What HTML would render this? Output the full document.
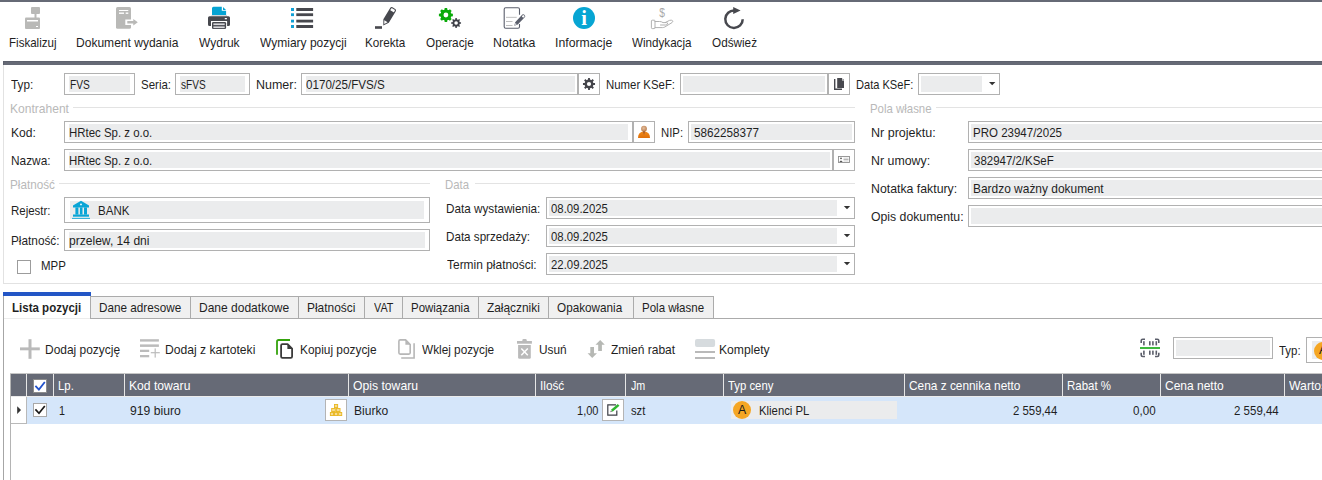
<!DOCTYPE html>
<html lang="pl"><head><meta charset="utf-8"><title>Faktura sprzedaży</title>
<style>
html,body{margin:0;padding:0;background:#fff;}
body{width:1322px;height:480px;overflow:hidden;position:relative;font-family:"Liberation Sans",sans-serif;font-size:13.0px;line-height:16px;color:#1f1f1f;}
.b{position:absolute;}
.t{position:absolute;white-space:nowrap;transform-origin:0 0;}
svg{position:absolute;overflow:visible;}
</style></head><body>
<div class="b" style="left:0px;top:0px;width:1322px;height:2px;background:#666a76"></div>
<div class="b" style="left:3px;top:61px;width:1319px;height:4px;background:#666a76"></div>
<div class="b" style="left:3px;top:61px;width:1319px;height:1px;background:#5d616d"></div>
<div class="b" style="left:3px;top:61px;width:1px;height:4px;background:#5d616d"></div>
<div class="b" style="left:3px;top:65px;width:1px;height:219px;background:#e2e2e2"></div>
<div class="b" style="left:3px;top:283px;width:1319px;height:1px;background:#e2e2e2"></div>
<div class="b" style="left:73px;top:107px;width:782px;height:1px;background:#e3e3e3"></div>
<div class="b" style="left:936px;top:107px;width:386px;height:1px;background:#e3e3e3"></div>
<div class="b" style="left:59px;top:183px;width:371px;height:1px;background:#e3e3e3"></div>
<div class="b" style="left:475px;top:183px;width:380px;height:1px;background:#e3e3e3"></div>
<div class="b" style="left:64px;top:73px;width:71px;height:22px;background:#fff;border:1px solid #b1b1b1;box-sizing:border-box"></div>
<div class="b" style="left:69px;top:76px;width:61px;height:16px;background:#ebeced"></div>
<div class="b" style="left:175px;top:73px;width:75px;height:22px;background:#fff;border:1px solid #b1b1b1;box-sizing:border-box"></div>
<div class="b" style="left:180px;top:76px;width:65px;height:16px;background:#ebeced"></div>
<div class="b" style="left:301px;top:73px;width:277px;height:22px;background:#fff;border:1px solid #b1b1b1;box-sizing:border-box"></div>
<div class="b" style="left:306px;top:76px;width:269px;height:16px;background:#ebeced"></div>
<div class="b" style="left:578px;top:73px;width:22px;height:22px;background:#fff;border:1px solid #b1b1b1;box-sizing:border-box"></div>
<div class="b" style="left:680px;top:73px;width:148px;height:22px;background:#fff;border:1px solid #b1b1b1;box-sizing:border-box"></div>
<div class="b" style="left:683px;top:76px;width:142px;height:16px;background:#ebeced"></div>
<div class="b" style="left:828px;top:73px;width:22px;height:22px;background:#fff;border:1px solid #b1b1b1;box-sizing:border-box"></div>
<div class="b" style="left:918px;top:73px;width:82px;height:22px;background:#fff;border:1px solid #b1b1b1;box-sizing:border-box"></div>
<div class="b" style="left:921px;top:76px;width:61px;height:16px;background:#ebeced"></div>
<div class="b" style="left:64px;top:121px;width:569px;height:22px;background:#fff;border:1px solid #b1b1b1;box-sizing:border-box"></div>
<div class="b" style="left:69px;top:124px;width:559px;height:16px;background:#ebeced"></div>
<div class="b" style="left:633px;top:121px;width:22px;height:22px;background:#fff;border:1px solid #b1b1b1;box-sizing:border-box"></div>
<div class="b" style="left:688px;top:121px;width:167px;height:22px;background:#fff;border:1px solid #b1b1b1;box-sizing:border-box"></div>
<div class="b" style="left:691px;top:124px;width:161px;height:16px;background:#ebeced"></div>
<div class="b" style="left:64px;top:149px;width:769px;height:22px;background:#fff;border:1px solid #b1b1b1;box-sizing:border-box"></div>
<div class="b" style="left:69px;top:152px;width:761px;height:16px;background:#ebeced"></div>
<div class="b" style="left:833px;top:149px;width:22px;height:22px;background:#fff;border:1px solid #b1b1b1;box-sizing:border-box"></div>
<div class="b" style="left:64px;top:197px;width:366px;height:26px;background:#fff;border:1px solid #b1b1b1;box-sizing:border-box"></div>
<div class="b" style="left:70px;top:201px;width:354px;height:18px;background:#ebeced"></div>
<div class="b" style="left:64px;top:229px;width:366px;height:22px;background:#fff;border:1px solid #b1b1b1;box-sizing:border-box"></div>
<div class="b" style="left:69px;top:232px;width:356px;height:16px;background:#ebeced"></div>
<div class="b" style="left:17px;top:260px;width:14px;height:14px;background:#fff;border:1px solid #9c9c9c;box-sizing:border-box"></div>
<div class="b" style="left:546px;top:197px;width:309px;height:22px;background:#fff;border:1px solid #b1b1b1;box-sizing:border-box"></div>
<div class="b" style="left:549px;top:200px;width:288px;height:16px;background:#ebeced"></div>
<div class="b" style="left:546px;top:225px;width:309px;height:22px;background:#fff;border:1px solid #b1b1b1;box-sizing:border-box"></div>
<div class="b" style="left:549px;top:228px;width:288px;height:16px;background:#ebeced"></div>
<div class="b" style="left:546px;top:253px;width:309px;height:22px;background:#fff;border:1px solid #b1b1b1;box-sizing:border-box"></div>
<div class="b" style="left:549px;top:256px;width:288px;height:16px;background:#ebeced"></div>
<div class="b" style="left:968px;top:121px;width:400px;height:22px;background:#fff;border:1px solid #b1b1b1;box-sizing:border-box"></div>
<div class="b" style="left:971px;top:124px;width:392px;height:16px;background:#ebeced"></div>
<div class="b" style="left:968px;top:149px;width:400px;height:22px;background:#fff;border:1px solid #b1b1b1;box-sizing:border-box"></div>
<div class="b" style="left:971px;top:152px;width:392px;height:16px;background:#ebeced"></div>
<div class="b" style="left:968px;top:177px;width:400px;height:22px;background:#fff;border:1px solid #b1b1b1;box-sizing:border-box"></div>
<div class="b" style="left:971px;top:180px;width:392px;height:16px;background:#ebeced"></div>
<div class="b" style="left:968px;top:205px;width:400px;height:22px;background:#fff;border:1px solid #b1b1b1;box-sizing:border-box"></div>
<div class="b" style="left:971px;top:208px;width:392px;height:16px;background:#ebeced"></div>
<div class="b" style="left:3px;top:318px;width:1319px;height:1px;background:#ababab"></div>
<div class="b" style="left:90px;top:296px;width:624px;height:22px;background:#f0f0f0;border:1px solid #ababab;box-sizing:border-box;border-bottom:none"></div>
<div class="b" style="left:190px;top:296px;width:1px;height:22px;background:#ababab"></div>
<div class="b" style="left:298px;top:296px;width:1px;height:22px;background:#ababab"></div>
<div class="b" style="left:363.5px;top:296px;width:1px;height:22px;background:#ababab"></div>
<div class="b" style="left:402px;top:296px;width:1px;height:22px;background:#ababab"></div>
<div class="b" style="left:478px;top:296px;width:1px;height:22px;background:#ababab"></div>
<div class="b" style="left:548px;top:296px;width:1px;height:22px;background:#ababab"></div>
<div class="b" style="left:633px;top:296px;width:1px;height:22px;background:#ababab"></div>
<div class="b" style="left:3px;top:292px;width:88px;height:4px;background:#2356c6"></div>
<div class="b" style="left:3px;top:296px;width:88px;height:23px;background:#fff;border-left:1px solid #ababab;border-right:1px solid #ababab;box-sizing:border-box"></div>
<div class="b" style="left:4px;top:318px;width:86px;height:1px;background:#ececec"></div>
<div class="b" style="left:3px;top:319px;width:1px;height:161px;background:#a6a6a6"></div>
<div class="b" style="left:1173px;top:337px;width:100px;height:22px;background:#fff;border:1px solid #b1b1b1;box-sizing:border-box"></div>
<div class="b" style="left:1176px;top:340px;width:94px;height:16px;background:#ebeced"></div>
<div class="b" style="left:1306px;top:337px;width:30px;height:26px;background:#fff;border:1px solid #b1b1b1;box-sizing:border-box"></div>
<div class="b" style="left:1312px;top:341px;width:20px;height:18px;background:#ebeced"></div>
<div class="b" style="left:1313.5px;top:341.5px;width:18px;height:18px;background:#f5a623;border-radius:9px"></div>
<div class="b" style="left:10px;top:373px;width:1px;height:107px;background:#b4b4b4"></div>
<div class="b" style="left:10px;top:373px;width:1312px;height:1px;background:#c6c6c6"></div>
<div class="b" style="left:11px;top:374px;width:1311px;height:22px;background:#666a76"></div>
<div class="b" style="left:26px;top:374px;width:1px;height:22px;background:#e6e6e6"></div>
<div class="b" style="left:53px;top:374px;width:1px;height:22px;background:#e6e6e6"></div>
<div class="b" style="left:124px;top:374px;width:1px;height:22px;background:#e6e6e6"></div>
<div class="b" style="left:348px;top:374px;width:1px;height:22px;background:#e6e6e6"></div>
<div class="b" style="left:535px;top:374px;width:1px;height:22px;background:#e6e6e6"></div>
<div class="b" style="left:625px;top:374px;width:1px;height:22px;background:#e6e6e6"></div>
<div class="b" style="left:723px;top:374px;width:1px;height:22px;background:#e6e6e6"></div>
<div class="b" style="left:904px;top:374px;width:1px;height:22px;background:#e6e6e6"></div>
<div class="b" style="left:1062px;top:374px;width:1px;height:22px;background:#e6e6e6"></div>
<div class="b" style="left:1160px;top:374px;width:1px;height:22px;background:#e6e6e6"></div>
<div class="b" style="left:1284px;top:374px;width:1px;height:22px;background:#e6e6e6"></div>
<div class="b" style="left:11px;top:396px;width:1311px;height:1px;background:#ebebeb"></div>
<div class="b" style="left:27px;top:397px;width:1295px;height:26.5px;background:#d5e6fa"></div>
<div class="b" style="left:26px;top:397px;width:1px;height:27px;background:#b9b9b9"></div>
<div class="b" style="left:11px;top:423px;width:16px;height:1px;background:#b9b9b9"></div>
<div class="b" style="left:33px;top:379px;width:14px;height:14px;background:#fff;border:1px solid #8c8c8c;box-sizing:border-box"></div>
<div class="b" style="left:33px;top:403px;width:14px;height:14px;background:#fff;border:1px solid #a8a8a8;box-sizing:border-box"></div>
<div class="b" style="left:325px;top:399px;width:22px;height:22px;background:#fff;border:1px solid #b4b4b4;box-sizing:border-box"></div>
<div class="b" style="left:602px;top:399px;width:22px;height:22px;background:#fff;border:1px solid #b4b4b4;box-sizing:border-box"></div>
<div class="b" style="left:731px;top:401px;width:166px;height:18px;background:#ebeced"></div>
<div class="b" style="left:733px;top:401px;width:18.2px;height:18.2px;background:#f5a623;border-radius:10px"></div>
<svg width="1322" height="480" viewBox="0 0 1322 480" style="left:0;top:0">
<rect x="31" y="7" width="9" height="7" rx="1" fill="#b9b9b7"/>
<rect x="34.5" y="13.5" width="2" height="4.5" fill="#b9b9b7"/>
<rect x="25" y="17.5" width="15" height="11.5" rx="1" fill="#b9b9b7"/>
<rect x="27" y="20" width="11" height="1.5" fill="#fff"/>
<rect x="36" y="26" width="2" height="1" fill="#fff"/>
<rect x="116" y="7" width="15" height="21.8" rx="1.5" fill="#b9b9b7"/>
<rect x="119" y="10" width="9.3" height="1" fill="#fff"/>
<rect x="119" y="12.5" width="5" height="1.4" fill="#fff"/><rect x="125.7" y="12.5" width="2.6" height="1.4" fill="#fff"/>
<rect x="125.3" y="19.5" width="6" height="5.5" fill="#fff"/>
<path d="M127.3 21 H133.3 V19 L137.8 22.2 L133.3 25.4 V23.4 H127.3Z" fill="#b9b9b7"/>
<path d="M213.5 6.8 H221.8 V10.7 H226.1 V15 H212 V8.3 Q212 6.8 213.5 6.8Z" fill="#05a3d3"/>
<path d="M223 7 L226 10 H223Z" fill="#05a3d3"/>
<rect x="211.5" y="15" width="15.5" height="1.4" fill="#d3d6d9"/>
<path d="M209.5 16.3 H228.5 Q230 16.3 230 17.8 V24.5 Q230 26 228.5 26 H227.1 V21 H211 V26 H209.5 Q208 26 208 24.5 V17.8 Q208 16.3 209.5 16.3Z" fill="#47484e"/>
<rect x="224.7" y="18" width="2.3" height="1.2" rx="0.5" fill="#fff"/>
<rect x="212" y="21.9" width="14.1" height="7.1" rx="1.3" fill="#47484e"/>
<rect x="213.4" y="23.4" width="11.3" height="1.7" fill="#d8d8db"/><rect x="213.4" y="26.4" width="11.3" height="1.7" fill="#d8d8db"/>
<rect x="291" y="8" width="3" height="3" fill="#10a0d6"/>
<rect x="296.3" y="8" width="16.8" height="3" fill="#47484e"/>
<rect x="291" y="13.3" width="3" height="2.8" fill="#10a0d6"/>
<rect x="296.3" y="13.3" width="16.8" height="2.8" fill="#47484e"/>
<rect x="291" y="19.7" width="3" height="2.8" fill="#10a0d6"/>
<rect x="296.3" y="19.7" width="16.8" height="2.8" fill="#47484e"/>
<rect x="291" y="25" width="3" height="3" fill="#10a0d6"/>
<rect x="296.3" y="25" width="16.8" height="3" fill="#47484e"/>
<g transform="translate(383.3 25.6) rotate(31.2)"><path d="M0 0 L-3.2 -5.4 V-18.8 Q-3.2 -20.4 -1.6 -20.4 H1.6 Q3.2 -20.4 3.2 -18.8 V-5.4Z" fill="#47484e"/><path d="M0 -1.8 L-1.9 -5.1 H1.9Z" fill="#fff"/><rect x="-2.1" y="-19.3" width="4.2" height="2.6" rx="0.6" fill="#fff"/></g>
<rect x="375" y="26.2" width="7" height="2.6" fill="#47484e"/>
<path d="M447.28 20.22 L447.16 21.99 L444.64 21.99 L444.52 20.22 L443.19 19.67 L441.85 20.83 L440.07 19.05 L441.23 17.71 L440.68 16.38 L438.91 16.26 L438.91 13.74 L440.68 13.62 L441.23 12.29 L440.07 10.95 L441.85 9.17 L443.19 10.33 L444.52 9.78 L444.64 8.01 L447.16 8.01 L447.28 9.78 L448.61 10.33 L449.95 9.17 L451.73 10.95 L450.57 12.29 L451.12 13.62 L452.89 13.74 L452.89 16.26 L451.12 16.38 L450.57 17.71 L451.73 19.05 L449.95 20.83 L448.61 19.67Z" fill="#0aab0a"/>
<circle cx="445.90" cy="15.00" r="5.40" fill="#0aab0a"/>
<circle cx="445.90" cy="15.00" r="2.40" fill="#fff"/>
<path d="M456.85 26.42 L456.84 27.94 L455.36 27.94 L455.35 26.42 L454.21 25.95 L453.13 27.02 L452.08 25.97 L453.15 24.89 L452.68 23.75 L451.16 23.74 L451.16 22.26 L452.68 22.25 L453.15 21.11 L452.08 20.03 L453.13 18.98 L454.21 20.05 L455.35 19.58 L455.36 18.06 L456.84 18.06 L456.85 19.58 L457.99 20.05 L459.07 18.98 L460.12 20.03 L459.05 21.11 L459.52 22.25 L461.04 22.26 L461.04 23.74 L459.52 23.75 L459.05 24.89 L460.12 25.97 L459.07 27.02 L457.99 25.95Z" fill="#3f4148"/>
<circle cx="456.10" cy="23.00" r="3.50" fill="#3f4148"/>
<circle cx="456.10" cy="23.00" r="1.80" fill="#fff"/>
<path d="M519.5 14.7 V9.3 Q519.5 7.8 518 7.8 H505.7 Q504.2 7.8 504.2 9.3 V26.7 Q504.2 28.2 505.7 28.2 H518 Q519.5 28.2 519.5 26.7 V24" fill="none" stroke="#5b5f6c" stroke-width="1.1"/>
<rect x="506" y="16.85" width="10.7" height="0.9" fill="#b8b8b8"/>
<rect x="506" y="21.05" width="6.5" height="0.9" fill="#b8b8b8"/>
<rect x="506" y="25.05" width="6.5" height="0.9" fill="#b8b8b8"/>
<g transform="translate(514.3 25.7) rotate(43.5)"><path d="M0 0 L-1.8 -3.2 V-13.6 Q-1.8 -14.8 -0.6 -14.8 H0.6 Q1.8 -14.8 1.8 -13.6 V-3.2Z" fill="#5b5f6c"/><path d="M0 -1 L-0.9 -2.7 H0.9Z" fill="#fff"/><rect x="-1.1" y="-14.1" width="2.2" height="2.2" rx="0.6" fill="#fff"/></g>
<circle cx="584" cy="18" r="11" fill="#07a5d3"/>
<text x="584" y="25.3" text-anchor="middle" font-family="'Liberation Serif',serif" font-weight="bold" font-size="20.5" fill="#fff">i</text>
<text transform="translate(662 16.6) scale(0.82 1)" text-anchor="middle" font-family="'Liberation Sans',sans-serif" font-size="12.5" fill="#a8a8a8">$</text>
<rect x="651.4" y="20.2" width="3.6" height="8.4" rx="0.8" fill="none" stroke="#adadad" stroke-width="0.95"/>
<path d="M655 21.5 H659.5 Q661.5 21.5 663 22.6 H666.5 Q668 22.6 667.6 24 Q667.2 25 665.8 25 H660.5 M665.5 22.4 L669.5 20.4 Q671.5 19.7 672.6 20.8 Q673.2 21.8 672 22.6 L664.8 27 Q663.8 27.6 662.5 27.6 H655" fill="none" stroke="#adadad" stroke-width="0.95" stroke-linejoin="round" stroke-linecap="round"/>
<path d="M734.6 10.6 A8.7 8.7 0 1 0 742.7 19.2" fill="none" stroke="#47484e" stroke-width="2.5"/>
<path d="M733.2 6.9 V14.1 L740.6 10.4Z" fill="#47484e"/>
<path d="M589.94 88.30 L589.91 90.03 L588.09 90.03 L588.06 88.30 L586.63 87.71 L585.38 88.91 L584.09 87.62 L585.29 86.37 L584.70 84.94 L582.97 84.91 L582.97 83.09 L584.70 83.06 L585.29 81.63 L584.09 80.38 L585.38 79.09 L586.63 80.29 L588.06 79.70 L588.09 77.97 L589.91 77.97 L589.94 79.70 L591.37 80.29 L592.62 79.09 L593.91 80.38 L592.71 81.63 L593.30 83.06 L595.03 83.09 L595.03 84.91 L593.30 84.94 L592.71 86.37 L593.91 87.62 L592.62 88.91 L591.37 87.71Z" fill="#44454b"/>
<circle cx="589.00" cy="84.00" r="4.40" fill="#44454b"/>
<circle cx="589.00" cy="84.00" r="2.10" fill="#fff"/>
<path d="M837.2 78 H842 V80.6 H844 V87.9 H837.2Z" fill="#47484e"/><path d="M842.6 78.2 L843.9 79.9 H842.6Z" fill="#47484e"/>
<path d="M834.7 79 V89.3 H842" fill="none" stroke="#47484e" stroke-width="1.4"/>
<defs><radialGradient id="hd" cx="0.45" cy="0.4" r="0.6"><stop offset="0" stop-color="#e6c19f"/><stop offset="1" stop-color="#b97a4a"/></radialGradient><linearGradient id="bd" x1="0" y1="0" x2="0" y2="1"><stop offset="0" stop-color="#f08a1c"/><stop offset="1" stop-color="#e06f08"/></linearGradient></defs>
<path d="M638 138 Q638 132 644 131.6 Q650 132 650 138Z" fill="url(#bd)"/>
<path d="M642.6 130.6 H645.4 L644 135Z" fill="#a85a28"/>
<circle cx="644" cy="128.7" r="2.9" fill="url(#hd)"/>
<rect x="838.5" y="156.5" width="11" height="6" fill="#fff" stroke="#8f8f8f" stroke-width="0.9"/>
<circle cx="841" cy="158.4" r="0.8" fill="#444"/><path d="M839.4 162 Q841 159 842.6 162Z" fill="#555"/>
<rect x="843.5" y="157.8" width="5" height="0.7" fill="#bbb"/><rect x="843.5" y="159.2" width="5" height="0.7" fill="#999"/><rect x="843.5" y="160.6" width="5" height="0.7" fill="#bbb"/>
<path d="M81 200.8 L89 205.6 V207.4 H73 V205.6Z" fill="#0aa5d6"/>
<circle cx="81" cy="204.4" r="0.9" fill="#fff"/>
<rect x="75.4" y="207.4" width="3" height="7.2" fill="#0aa5d6"/>
<rect x="79.9" y="207.4" width="2.6" height="7.2" fill="#0aa5d6"/>
<rect x="84" y="207.4" width="3" height="7.2" fill="#0aa5d6"/>
<rect x="73" y="214.5" width="16" height="2.2" fill="#0aa5d6"/>
<rect x="72" y="217.9" width="18" height="0.9" fill="#0aa5d6"/>
<path d="M843.8 205.9 h6.4 l-3.2 3.3Z" fill="#333"/>
<path d="M843.8 233.9 h6.4 l-3.2 3.3Z" fill="#333"/>
<path d="M843.8 261.9 h6.4 l-3.2 3.3Z" fill="#333"/>
<path d="M989 81.9 h6.4 l-3.2 3.3Z" fill="#333"/>
<rect x="20" y="347.4" width="19.8" height="2.9" fill="#bababa"/><rect x="28.5" y="339.2" width="3" height="19.6" fill="#bababa"/>
<rect x="140" y="339.2" width="18.9" height="2.4" fill="#bcbcbc"/>
<rect x="140" y="344.4" width="18.9" height="2.5" fill="#bcbcbc"/>
<rect x="140" y="349.7" width="9.2" height="2.3" fill="#bcbcbc"/>
<rect x="140" y="355" width="9.2" height="2.3" fill="#bcbcbc"/>
<rect x="150.8" y="352.1" width="9" height="1.2" fill="#bcbcbc"/><rect x="154.6" y="348.4" width="1.2" height="9.2" fill="#bcbcbc"/>
<path d="M277 354.7 V341.6 Q277 340 278.6 340 H290" fill="none" stroke="#35a30d" stroke-width="1.8"/>
<path d="M287.6 344.2 H282.4 Q281.1 344.2 281.1 345.5 V356.6 Q281.1 357.9 282.4 357.9 H290.8 Q292.1 357.9 292.1 356.6 V348.7Z" fill="#fff" stroke="#3b3b3b" stroke-width="1.8" stroke-linejoin="round"/>
<path d="M287.4 344.2 V348.9 H292.1Z" fill="#3b3b3b"/>
<path d="M405.6 339.9 H400.2 Q398.9 339.9 398.9 341.2 V352.8 Q398.9 354.1 400.2 354.1 H408.9 Q410.2 354.1 410.2 352.8 V344.6Z" fill="#fff" stroke="#b7b7b7" stroke-width="1.6" stroke-linejoin="round"/>
<path d="M405.4 339.9 V344.8 H410.2Z" fill="#b7b7b7"/>
<path d="M414.1 343.2 V358 H401.2" fill="none" stroke="#b7b7b7" stroke-width="1.6"/>
<rect x="517" y="341" width="14.9" height="2.7" fill="#bababa"/>
<path d="M522.3 341.2 V340.4 Q522.3 339 523.7 339 H525.4 Q526.8 339 526.8 340.4 V341.2Z" fill="#bababa"/>
<path d="M518.1 345.1 H530.8 V357.4 Q530.8 358.8 529.4 358.8 H519.5 Q518.1 358.8 518.1 357.4Z" fill="#bababa"/>
<path d="M521.3 348.6 L527.8 355.3 M527.8 348.6 L521.3 355.3" stroke="#fff" stroke-width="1.5" fill="none"/>
<path d="M600.2 340.1 L604.8 344.7 H601.9 V351 H598.2 V344.7 H595.5Z" fill="#b6b8b4"/>
<path d="M590.3 347 H594 V353.2 H597 L592.2 358 L587.6 353.2 H590.3Z" fill="#b6b8b4"/>
<rect x="695" y="339.1" width="20.1" height="7.8" rx="2" fill="#d6dbde"/>
<rect x="695" y="351.1" width="20" height="1.8" fill="#b2b2b2"/><rect x="695" y="357.1" width="20" height="1.8" fill="#b2b2b2"/>
<path d="M1141.2 343 V340.8 Q1141.2 339.3 1142.7 339.3 H1145 M1155 339.3 H1157.3 Q1158.8 339.3 1158.8 340.8 V343 M1158.8 352.8 V355 Q1158.8 356.5 1157.3 356.5 H1155 M1145 356.5 H1142.7 Q1141.2 356.5 1141.2 355 V352.8" fill="none" stroke="#5b5e6a" stroke-width="1.6"/>
<rect x="1143.1" y="341.2" width="1.6" height="4.2" fill="#5b5e6a"/><rect x="1143.1" y="350.6" width="1.6" height="4.2" fill="#5b5e6a"/>
<rect x="1149" y="341.2" width="1.6" height="4.2" fill="#5b5e6a"/><rect x="1149" y="350.6" width="1.6" height="4.2" fill="#5b5e6a"/>
<rect x="1152.1" y="341.2" width="1.6" height="4.2" fill="#5b5e6a"/><rect x="1152.1" y="350.6" width="1.6" height="4.2" fill="#5b5e6a"/>
<rect x="1155.5" y="341.2" width="1.6" height="4.2" fill="#5b5e6a"/><rect x="1155.5" y="350.6" width="1.6" height="4.2" fill="#5b5e6a"/>
<rect x="1140" y="347" width="20" height="2" fill="#3fb83f"/>
<path d="M35.4 385.8 L38.9 389.6 L44.8 382" fill="none" stroke="#2252cc" stroke-width="1.8"/>
<path d="M35.4 409.4 L39 413.3 L44.8 406" fill="none" stroke="#1a1a1a" stroke-width="1.7"/>
<path d="M17.2 406.2 V414 L21 410.1Z" fill="#333"/>
<rect x="334" y="404" width="4.1" height="4" fill="#e9b824"/><rect x="334.9" y="404.9" width="2.3" height="2.2" fill="#f6dc93"/>
<rect x="331.2" y="408" width="4.6" height="4" fill="#e9b824"/><rect x="332.1" y="408.9" width="2.8" height="2.2" fill="#f6dc93"/>
<rect x="335.9" y="408" width="4.6" height="4" fill="#e9b824"/><rect x="336.8" y="408.9" width="2.8" height="2.2" fill="#f6dc93"/>
<rect x="329.9" y="412" width="4.1" height="4" fill="#e9b824"/><rect x="330.8" y="412.9" width="2.3" height="2.2" fill="#f6dc93"/>
<rect x="334" y="412" width="4.1" height="4" fill="#e9b824"/><rect x="334.9" y="412.9" width="2.3" height="2.2" fill="#f6dc93"/>
<rect x="338.1" y="412" width="4.1" height="4" fill="#e9b824"/><rect x="339" y="412.9" width="2.3" height="2.2" fill="#f6dc93"/>
<path d="M616 404.9 H607.8 V415.1 H616.8 V410.6" fill="none" stroke="#3c3f46" stroke-width="1.2"/>
<path d="M618.6 404.9 L611.8 410.7" stroke="#2fb52f" stroke-width="2.5" fill="none"/>
<path d="M610.2 412.3 L610.9 410.4 L612.3 411.6Z" fill="#666"/>
</svg>

<span class="t" style="left:8.71px;top:34.50px;transform:scaleX(0.8891)">Fiskalizuj</span>
<span class="t" style="left:75.67px;top:34.50px;transform:scaleX(0.9260)">Dokument wydania</span>
<span class="t" style="left:198.98px;top:34.50px;transform:scaleX(0.9234)">Wydruk</span>
<span class="t" style="left:259.73px;top:34.50px;transform:scaleX(0.9235)">Wymiary pozycji</span>
<span class="t" style="left:365.20px;top:34.50px;transform:scaleX(0.9006)">Korekta</span>
<span class="t" style="left:426.04px;top:34.50px;transform:scaleX(0.9036)">Operacje</span>
<span class="t" style="left:493.15px;top:34.50px;transform:scaleX(0.9463)">Notatka</span>
<span class="t" style="left:555.04px;top:34.50px;transform:scaleX(0.9432)">Informacje</span>
<span class="t" style="left:632.24px;top:34.50px;transform:scaleX(0.8949)">Windykacja</span>
<span class="t" style="left:711.79px;top:34.50px;transform:scaleX(0.9028)">Odśwież</span>
<span class="t" style="left:11.37px;top:76.50px;transform:scaleX(0.9038)">Typ:</span>
<span class="t" style="left:69.56px;top:76.50px;transform:scaleX(0.7853)">FVS</span>
<span class="t" style="left:141.05px;top:76.50px;transform:scaleX(0.8840)">Seria:</span>
<span class="t" style="left:180.81px;top:76.50px;transform:scaleX(0.7741)">sFVS</span>
<span class="t" style="left:255.64px;top:76.50px;transform:scaleX(0.9605)">Numer:</span>
<span class="t" style="left:306.15px;top:76.50px;transform:scaleX(0.8941)">0170/25/FVS/S</span>
<span class="t" style="left:605.72px;top:76.50px;transform:scaleX(0.8763)">Numer KSeF:</span>
<span class="t" style="left:855.75px;top:76.50px;transform:scaleX(0.8523)">Data KSeF:</span>
<span class="t" style="left:9.92px;top:100.50px;transform:scaleX(0.9264);color:#b9b9b9">Kontrahent</span>
<span class="t" style="left:869.97px;top:100.50px;transform:scaleX(0.8781);color:#b9b9b9">Pola własne</span>
<span class="t" style="left:10.67px;top:124.50px;transform:scaleX(0.9299)">Kod:</span>
<span class="t" style="left:68.97px;top:124.50px;transform:scaleX(0.8800)">HRtec Sp. z o.o.</span>
<span class="t" style="left:661.48px;top:124.50px;transform:scaleX(0.8714)">NIP:</span>
<span class="t" style="left:693.65px;top:124.50px;transform:scaleX(0.8984)">5862258377</span>
<span class="t" style="left:10.69px;top:152.50px;transform:scaleX(0.9127)">Nazwa:</span>
<span class="t" style="left:68.97px;top:152.50px;transform:scaleX(0.8800)">HRtec Sp. z o.o.</span>
<span class="t" style="left:9.95px;top:176.50px;transform:scaleX(0.9000);color:#b9b9b9">Płatność</span>
<span class="t" style="left:444.98px;top:176.50px;transform:scaleX(0.8736);color:#b9b9b9">Data</span>
<span class="t" style="left:10.72px;top:202.50px;transform:scaleX(0.8833)">Rejestr:</span>
<span class="t" style="left:97.71px;top:202.50px;transform:scaleX(0.8876)">BANK</span>
<span class="t" style="left:10.69px;top:232.50px;transform:scaleX(0.9080)">Płatność:</span>
<span class="t" style="left:69.04px;top:232.50px;transform:scaleX(0.9282)">przelew, 14 dni</span>
<span class="t" style="left:40.72px;top:258.00px;transform:scaleX(0.8830)">MPP</span>
<span class="t" style="left:446.20px;top:200.50px;transform:scaleX(0.9004)">Data wystawienia:</span>
<span class="t" style="left:551.16px;top:200.50px;transform:scaleX(0.8734)">08.09.2025</span>
<span class="t" style="left:446.20px;top:228.50px;transform:scaleX(0.8954)">Data sprzedaży:</span>
<span class="t" style="left:551.16px;top:228.50px;transform:scaleX(0.8734)">08.09.2025</span>
<span class="t" style="left:446.87px;top:256.50px;transform:scaleX(0.9196)">Termin płatności:</span>
<span class="t" style="left:551.05px;top:256.50px;transform:scaleX(0.8751)">22.09.2025</span>
<span class="t" style="left:870.64px;top:124.50px;transform:scaleX(0.9638)">Nr projektu:</span>
<span class="t" style="left:973.21px;top:124.50px;transform:scaleX(0.8854)">PRO 23947/2025</span>
<span class="t" style="left:870.65px;top:152.50px;transform:scaleX(0.9525)">Nr umowy:</span>
<span class="t" style="left:973.66px;top:152.50px;transform:scaleX(0.8828)">382947/2/KSeF</span>
<span class="t" style="left:870.65px;top:180.50px;transform:scaleX(0.9468)">Notatka faktury:</span>
<span class="t" style="left:973.18px;top:180.50px;transform:scaleX(0.9179)">Bardzo ważny dokument</span>
<span class="t" style="left:871.01px;top:208.50px;transform:scaleX(0.9420)">Opis dokumentu:</span>
<span class="t" style="left:12.07px;top:299.50px;transform:scaleX(0.8872);font-weight:bold">Lista pozycji</span>
<span class="t" style="left:98.85px;top:299.50px;transform:scaleX(0.9022)">Dane adresowe</span>
<span class="t" style="left:199.03px;top:299.50px;transform:scaleX(0.9245)">Dane dodatkowe</span>
<span class="t" style="left:306.73px;top:299.50px;transform:scaleX(0.9170)">Płatności</span>
<span class="t" style="left:373.55px;top:299.50px;transform:scaleX(0.8283)">VAT</span>
<span class="t" style="left:410.77px;top:299.50px;transform:scaleX(0.8802)">Powiązania</span>
<span class="t" style="left:487.31px;top:299.50px;transform:scaleX(0.9142)">Załączniki</span>
<span class="t" style="left:557.49px;top:299.50px;transform:scaleX(0.9026)">Opakowania</span>
<span class="t" style="left:641.76px;top:299.50px;transform:scaleX(0.8854)">Pola własne</span>
<span class="t" style="left:44.93px;top:341.50px;transform:scaleX(0.9192)">Dodaj pozycję</span>
<span class="t" style="left:164.92px;top:341.50px;transform:scaleX(0.9332)">Dodaj z kartoteki</span>
<span class="t" style="left:299.94px;top:341.50px;transform:scaleX(0.9137)">Kopiuj pozycje</span>
<span class="t" style="left:422.24px;top:341.50px;transform:scaleX(0.9067)">Wklej pozycje</span>
<span class="t" style="left:538.94px;top:341.50px;transform:scaleX(0.9088)">Usuń</span>
<span class="t" style="left:611.00px;top:341.50px;transform:scaleX(0.9241)">Zmień rabat</span>
<span class="t" style="left:719.42px;top:341.50px;transform:scaleX(0.9346)">Komplety</span>
<span class="t" style="left:58.22px;top:377.50px;transform:scaleX(0.8756);color:#ffffff">Lp.</span>
<span class="t" style="left:128.92px;top:377.50px;transform:scaleX(0.9339);color:#ffffff">Kod towaru</span>
<span class="t" style="left:352.76px;top:377.50px;transform:scaleX(0.9378);color:#ffffff">Opis towaru</span>
<span class="t" style="left:539.83px;top:377.50px;transform:scaleX(0.9069);color:#ffffff">Ilość</span>
<span class="t" style="left:630.64px;top:377.50px;transform:scaleX(0.8246);color:#ffffff">Jm</span>
<span class="t" style="left:728.38px;top:377.50px;transform:scaleX(0.8725);color:#ffffff">Typ ceny</span>
<span class="t" style="left:908.53px;top:377.50px;transform:scaleX(0.9124);color:#ffffff">Cena z cennika netto</span>
<span class="t" style="left:1066.97px;top:377.50px;transform:scaleX(0.8817);color:#ffffff">Rabat %</span>
<span class="t" style="left:1164.77px;top:377.50px;transform:scaleX(0.9224);color:#ffffff">Cena netto</span>
<span class="t" style="left:1289.13px;top:377.50px;transform:scaleX(0.9400);color:#ffffff">Wartość netto</span>
<span class="t" style="left:59.12px;top:402.50px;transform:scaleX(0.8267)">1</span>
<span class="t" style="left:129.76px;top:402.50px;transform:scaleX(0.9368)">919 biuro</span>
<span class="t" style="left:353.67px;top:402.50px;transform:scaleX(0.9300)">Biurko</span>
<span class="t" style="left:576.50px;top:402.50px;transform:scaleX(0.8484)">1,00</span>
<span class="t" style="left:631.28px;top:402.50px;transform:scaleX(0.8620)">szt</span>
<span class="t" style="left:758.73px;top:402.50px;transform:scaleX(0.8718)">Klienci PL</span>
<span class="t" style="left:1012.80px;top:402.50px;transform:scaleX(0.8746)">2 559,44</span>
<span class="t" style="left:1132.90px;top:402.50px;transform:scaleX(0.8928)">0,00</span>
<span class="t" style="left:1234.30px;top:402.50px;transform:scaleX(0.8846)">2 559,44</span>
<span class="t" style="left:738.15px;top:401.50px;transform:scaleX(0.9449);color:#1a1a1a">A</span>
<span class="t" style="left:1319.35px;top:341.50px;transform:scaleX(0.9449);color:#1a1a1a">A</span>
<span class="t" style="left:1279.13px;top:342.50px;transform:scaleX(0.8800)">Typ:</span>
</body></html>
